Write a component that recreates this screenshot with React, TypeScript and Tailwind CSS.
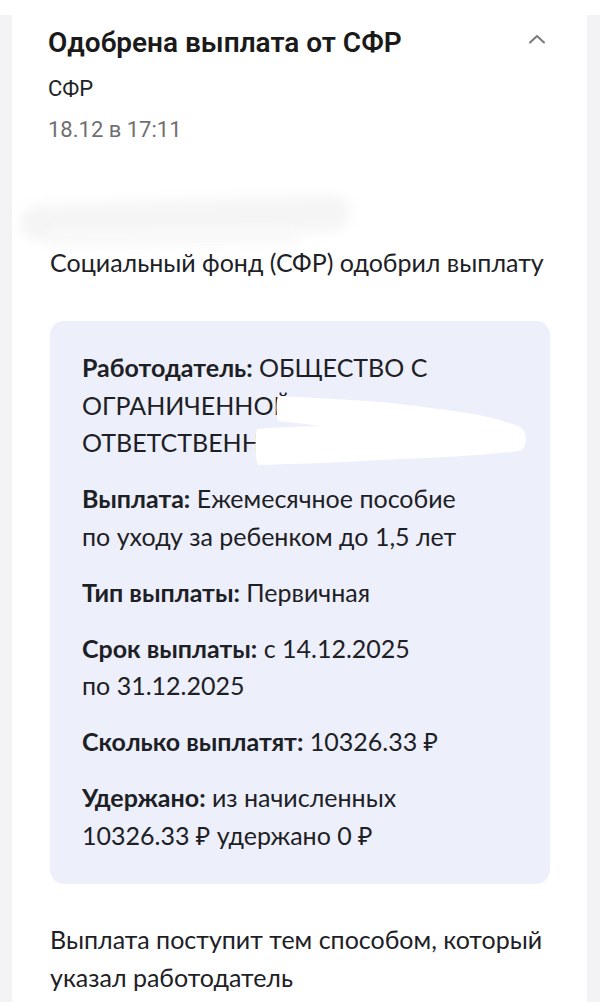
import React from "react";

const body = { fontFamily: 'Lato, "Noto Sans", sans-serif' };
const head = { fontFamily: 'Roboto, "Noto Sans", sans-serif' };

function Row({ label, children }: { label: string; children: React.ReactNode }) {
  return (
    <p className="text-[25px] leading-[37.5px] text-[#1d2126]">
      <span className="font-bold">{label}</span> {children}
    </p>
  );
}

export default function App() {
  return (
    <div className="min-h-screen w-[600px] bg-white">
      <div className="h-[15px] bg-white" />
      <div className="bg-[#f3f3f5] pl-[12px] pr-[13px]">
        <div className="relative bg-white pl-[38px] pr-[37px] pt-[12px] pb-[40px]">
          <div className="flex items-start justify-between">
            <h1 style={head} className="text-[28px] leading-[32px] font-semibold text-[#1a1a1a] -ml-[2px]">
              Одобрена выплата от СФР
            </h1>
            <svg width="18" height="10" viewBox="0 0 18 10" className="mt-[7px] mr-[4px]" fill="none">
              <path d="M2 8.5 L9 2 L16 8.5" stroke="#7a7a7a" strokeWidth="2" strokeLinecap="round" strokeLinejoin="round" />
            </svg>
          </div>
          <div style={head} className="mt-[16px] text-[22px] leading-[28px] text-[#222] -ml-[2px]">СФР</div>
          <div style={head} className="mt-[13px] text-[22px] leading-[28px] text-[#6f6f72] -ml-[2px]">18.12 в 17:11</div>

          <div className="relative h-[100px]">
            <div className="absolute left-[-30px] top-[56px] h-[36px] w-[330px] -rotate-[2deg] rounded-full bg-[#f5f5f6] blur-[6px]" />
            <div className="absolute left-[0px] top-[82px] h-[18px] w-[250px] rounded-full bg-[#f8f8f9] blur-[6px]" />
          </div>

          <p style={body} className="text-[25px] leading-[36px] text-[#1d2126]">
            Социальный фонд (СФР) одобрил выплату
          </p>

          <div style={body} className="relative mt-[41px] flex flex-col gap-[18.5px] rounded-[14px] bg-[#edf0fa] pl-[32px] pr-[16px] pt-[28px] pb-[30px]">
            <Row label="Работодатель:">
              ОБЩЕСТВО С<br />ОГРАНИЧЕННОЙ<br />ОТВЕТСТВЕННОСТЬЮ
            </Row>
            <Row label="Выплата:">
              Ежемесячное пособие<br />по уходу за ребенком до 1,5 лет
            </Row>
            <Row label="Тип выплаты:">Первичная</Row>
            <Row label="Срок выплаты:">
              с 14.12.2025<br />по 31.12.2025
            </Row>
            <Row label="Сколько выплатят:">10326.33 ₽</Row>
            <Row label="Удержано:">
              из начисленных<br />10326.33 ₽ удержано 0 ₽
            </Row>
            <svg
              className="pointer-events-none absolute left-0 top-0"
              width="500"
              height="200"
              viewBox="0 0 500 200"
            >
              <path
                d="M228 75 C280 78 330 80 350 83 C390 88 420 92 433 95 C450 99 465 103 470 106 C478 110 478 126 470 130 C430 134 390 137 350 138 C300 141 250 143 208 144 C205 138 205 114 207 108 C230 106 250 106 270 105 C255 103 240 101 228 100 C226 92 226 80 228 75 Z"
                fill="#ffffff"
              />
            </svg>
          </div>

          <p style={body} className="mt-[37px] text-[25px] leading-[37.5px] text-[#1d2126]">
            Выплата поступит тем способом, который<br />указал работодатель
          </p>
        </div>
      </div>
    </div>
  );
}
